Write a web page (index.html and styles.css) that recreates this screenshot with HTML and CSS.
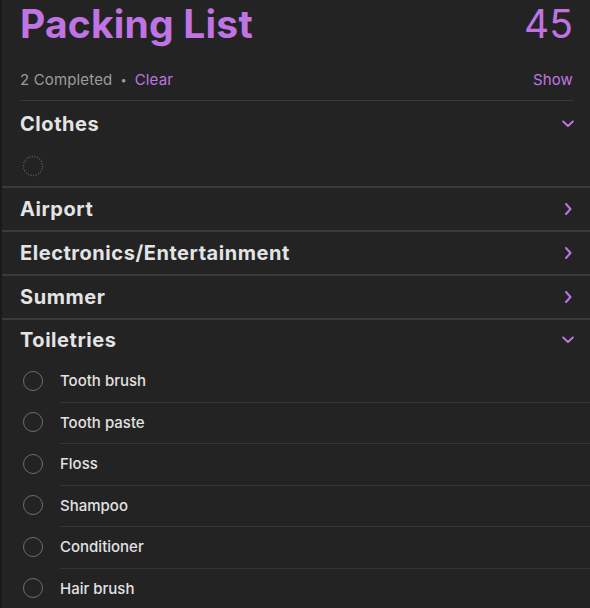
FILE: index.html
```html
<!DOCTYPE html>
<html>
<head>
<meta charset="utf-8">
<link rel="stylesheet" href="styles.css">
</head>
<body>
<div class="app">
  <header class="top">
    <div class="title-row">
      <h1 class="title">Packing List</h1>
      <span class="count">45</span>
    </div>
    <div class="status-row">
      <div class="status-left">
        <span class="muted">2 Completed</span>
        <span class="dot">•</span>
        <span class="accent">Clear</span>
      </div>
      <span class="accent">Show</span>
    </div>
  </header>

  <section class="group group-first">
    <div class="group-head head-clothes">
      <span class="group-name">Clothes</span>
      <svg class="chev" width="12" height="8" viewBox="0 0 12 8"><path d="M1.2 1.5 L6 6 L10.8 1.5" fill="none" stroke="#c073e3" stroke-width="2" stroke-linecap="round" stroke-linejoin="round"/></svg>
    </div>
    <div class="empty-row">
      <svg class="dotted" width="22" height="22" viewBox="0 0 22 22"><circle cx="11" cy="11" r="9.5" fill="none" stroke="#5e5e5e" stroke-width="1.3" stroke-dasharray="1.1 1.6"/></svg>
    </div>
  </section>

  <section class="group">
    <div class="group-head">
      <span class="group-name">Airport</span>
      <svg class="chev" width="12" height="12" viewBox="0 0 12 12"><path d="M4 1 L8.5 6 L4 11" fill="none" stroke="#c073e3" stroke-width="2" stroke-linecap="round" stroke-linejoin="round"/></svg>
    </div>
  </section>

  <section class="group">
    <div class="group-head">
      <span class="group-name">Electronics/Entertainment</span>
      <svg class="chev" width="12" height="12" viewBox="0 0 12 12"><path d="M4 1 L8.5 6 L4 11" fill="none" stroke="#c073e3" stroke-width="2" stroke-linecap="round" stroke-linejoin="round"/></svg>
    </div>
  </section>

  <section class="group">
    <div class="group-head">
      <span class="group-name">Summer</span>
      <svg class="chev" width="12" height="12" viewBox="0 0 12 12"><path d="M4 1 L8.5 6 L4 11" fill="none" stroke="#c073e3" stroke-width="2" stroke-linecap="round" stroke-linejoin="round"/></svg>
    </div>
  </section>

  <section class="group">
    <div class="group-head head-toiletries">
      <span class="group-name">Toiletries</span>
      <svg class="chev" width="12" height="8" viewBox="0 0 12 8"><path d="M1.2 1.5 L6 6 L10.8 1.5" fill="none" stroke="#c073e3" stroke-width="2" stroke-linecap="round" stroke-linejoin="round"/></svg>
    </div>
    <ul class="items">
      <li class="item"><span class="circle"></span><span class="item-text">Tooth brush</span></li>
      <li class="item"><span class="circle"></span><span class="item-text">Tooth paste</span></li>
      <li class="item"><span class="circle"></span><span class="item-text">Floss</span></li>
      <li class="item"><span class="circle"></span><span class="item-text">Shampoo</span></li>
      <li class="item"><span class="circle"></span><span class="item-text">Conditioner</span></li>
      <li class="item"><span class="circle"></span><span class="item-text">Hair brush</span></li>
    </ul>
  </section>
</div>
</body>
</html>
```

FILE: styles.css
```css
* { box-sizing: border-box; }

html, body {
  margin: 0;
  padding: 0;
  background: #232323;
  font-family: "Inter", "Liberation Sans", sans-serif;
  overflow: hidden;
}

.app {
  min-height: 608px;
  border-left: 2px solid #191919;
  background: #232323;
}

.top {
  padding: 0 17px 0 18px;
}

.title-row {
  display: flex;
  justify-content: space-between;
  align-items: flex-start;
  height: 64px;
  padding-top: 1px;
}

.title {
  margin: 0;
  font-size: 39px;
  font-weight: 700;
  line-height: 46px;
  color: #c073e3;
  letter-spacing: 0.2px;
}

.count {
  font-size: 39px;
  font-weight: 400;
  line-height: 46px;
  color: #c073e3;
}

.status-row {
  display: flex;
  justify-content: space-between;
  align-items: center;
  height: 37px;
  font-size: 15px;
  letter-spacing: 0.15px;
  border-bottom: 1px solid #393939;
  padding-bottom: 5px;
}

.status-left {
  display: flex;
  align-items: center;
  gap: 8px;
}

.muted { color: #9c9c9c; }
.dot { color: #9c9c9c; font-size: 11px; }
.accent { color: #c073e3; }

.group {
  border-bottom: 2px solid #3a3a3a;
}

.group-head {
  display: flex;
  justify-content: space-between;
  align-items: center;
  height: 42px;
  padding: 0 16px 0 18px;
}

.head-clothes { height: 45px; }
.head-toiletries { height: 40px; }

.group-name {
  font-size: 20px;
  font-weight: 700;
  color: #e4e4e4;
  letter-spacing: 0.55px;
}

.chev { display: block; }

.empty-row {
  height: 40px;
  display: flex;
  align-items: center;
  padding-left: 20px;
}

.dotted { display: block; }

.circle {
  width: 20px;
  height: 20px;
  border-radius: 50%;
  border: 1.5px solid #6e6e6e;
  flex: none;
}

.items {
  list-style: none;
  margin: 0;
  padding: 0;
}

.item {
  display: flex;
  align-items: center;
  height: 41.5px;
  padding-left: 21px;
  position: relative;
}

.item + .item::before {
  content: "";
  position: absolute;
  left: 58px;
  right: 0;
  top: 0;
  border-top: 1px solid #363636;
}

.item-text {
  margin-left: 17px;
  font-size: 15px;
  font-weight: 500;
  color: #e2e2e2;
}
```
